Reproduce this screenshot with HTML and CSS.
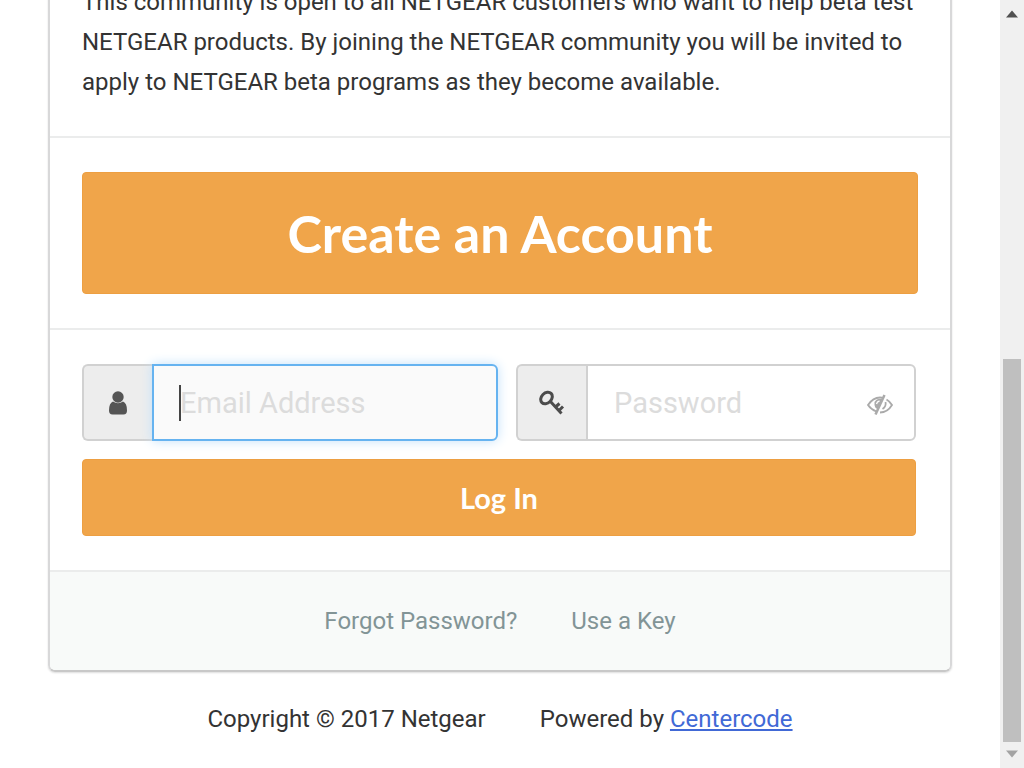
FILE: index.html
```html
<!DOCTYPE html>
<html lang="en">
<head>
<meta charset="utf-8">
<meta name="viewport" content="width=device-width, initial-scale=1">
<title>NETGEAR Community</title>
<link rel="stylesheet" href="styles.css">
</head>
<body>
<div class="page">
  <main class="card">
    <section class="section intro">
      <p>This community is open to all NETGEAR customers who want to help beta test NETGEAR products. By joining the NETGEAR community you will be invited to apply to NETGEAR beta programs as they become available.</p>
    </section>
    <section class="section">
      <button class="button button-large" type="button">Create an Account</button>
    </section>
    <section class="section">
      <form class="login">
        <div class="fields">
          <div class="field field-email">
            <label class="addon" for="email" aria-label="Email Address">
              <svg width="18" height="24" viewBox="0 0 18 24" fill="#555"><circle cx="9" cy="6" r="5.7"/><path d="M4 10.5Q9 14 14 10.5Q18 12 18 19.500Q18 23.500 14.500 23.500H3.500Q0 23.500 0 19.500Q0 12 4 10.500Z"/></svg>
            </label>
            <div class="control focused"><input id="email" type="email" placeholder="Email Address"></div>
          </div>
          <div class="field field-password">
            <label class="addon" for="password" aria-label="Password">
              <svg width="26" height="26" viewBox="0 0 26 26" fill="none" stroke="#4c4c4c"><ellipse cx="7.500" cy="8" rx="6.500" ry="5" transform="rotate(-45 7.500 8)" stroke-width="3"/><path d="M11 11L22.500 23.500M16.500 17L20.500 13.500M20 20.500L24 16.500" stroke-width="3"/></svg>
            </label>
            <div class="control">
              <input id="password" type="password" placeholder="Password">
              <button class="reveal" type="button" aria-label="Show password">
                <svg width="28" height="22" viewBox="0 0 28 22" fill="none" stroke="#aaa" stroke-width="1.800"><path d="M10.500 17.500Q5 15.500 2 11Q7 3.500 14 3.500Q16 3.500 17.500 4M20.500 5.500Q24 7.500 26 11Q21.500 18.500 14 18.500"/><path d="M8.500 8Q8 14 11.500 15L17 5Q11 3.500 8.500 8Z" fill="#aaa" stroke="none"/><path d="M18.500 1L9.500 20.500" stroke-width="2.500"/><path d="M19.500 8Q20.500 12.500 16.500 15"/><path d="M10.500 10Q11 7.500 13.500 7" stroke="#fff" stroke-width="1.300"/></svg>
              </button>
            </div>
          </div>
        </div>
        <button class="button" type="submit">Log In</button>
      </form>
    </section>
    <nav class="links">
      <a href="#">Forgot Password?</a>
      <a href="#">Use a Key</a>
    </nav>
  </main>
  <footer class="footer">
    <span>Copyright © 2017 Netgear</span>
    <span>Powered by <a href="#">Centercode</a></span>
  </footer>
</div>
<div class="scrollbar" aria-hidden="true">
  <svg width="12" height="8" viewBox="0 0 12 8"><path d="M0 7.500L6 0.500L12 7.500Z" fill="#505050"/></svg>
  <div class="track"><div class="thumb"></div></div>
  <svg width="12" height="8" viewBox="0 0 12 8"><path d="M0 0.500L6 7.500L12 0.500Z" fill="#a3a3a3"/></svg>
</div>
</body>
</html>
```
FILE: styles.css
```css
* { box-sizing: border-box; }
body {
  margin: 0;
  height: 100vh;
  display: flex;
  overflow: hidden;
  background: #fff;
  color: #333;
  font: 24px/40px Roboto, "Liberation Sans", sans-serif;
}
svg { display: block; }
.page { flex: 1; min-width: 0; padding: 0 48px; }
.card {
  margin-top: -18px;
  border: 2px solid #d8d8d9;
  border-top: 0;
  border-bottom-color: #c8c8c8;
  border-radius: 0 0 7px 7px;
  box-shadow: 0 1px 2px #ddd;
}
.section { padding: 34px 32px; border-bottom: 2px solid #ebecec; }
.intro { padding-top: 0; }
.intro p { margin: 0; }
.button {
  display: block;
  width: 100%;
  height: 77px;
  border: 1px solid #ed9f42;
  border-radius: 4px;
  background: #f0a54a;
  color: #fff;
  font: bold 29px Lato, sans-serif;
}
.button-large { height: 122px; font-size: 52px; }
.login { display: grid; gap: 18px; padding-right: 2px; }
.fields { display: flex; gap: 18px; }
.field { display: flex; min-width: 0; height: 77px; }
.field-email { flex: 416; }
.field-password { flex: 400; }
.addon {
  display: grid;
  place-items: center;
  width: 70px;
  flex: none;
  border: 2px solid #d1d1d1;
  border-right: 0;
  border-radius: 6px 0 0 6px;
  background: #ededed;
}
.control {
  position: relative;
  display: flex;
  align-items: center;
  flex: 1;
  min-width: 0;
  border: 2px solid #d1d1d1;
  border-radius: 0 6px 6px 0;
}
.control input {
  width: 100%;
  min-width: 0;
  height: 100%;
  padding: 0 26px;
  border: 0;
  outline: 0;
  background: transparent;
  font: 29px Roboto, sans-serif;
}
.control input::placeholder { color: #dcdcdc; opacity: 1; }
.focused { border-color: #66b3f0; background: #fafafa; box-shadow: 0 0 12px #c3e1fa; }
.focused::before {
  content: "";
  position: absolute;
  left: 25px;
  width: 2px;
  height: 36px;
  background: #444;
}
.reveal { flex: none; margin: 4px 20px 0 0; padding: 0; border: 0; background: none; }
.links {
  display: flex;
  justify-content: center;
  gap: 54px;
  padding: 29px 32px;
  border-radius: 0 0 5px 5px;
  background: #f8faf9;
}
.links a { color: #829496; text-decoration: none; }
.footer { display: flex; justify-content: center; gap: 54px; padding-top: 27px; }
.footer a { color: #4169d6; }
.scrollbar {
  display: flex;
  flex-direction: column;
  align-items: center;
  gap: 8px;
  width: 24px;
  padding: 10px 0;
  background: #f0f0f0;
}
.track { display: flex; flex-direction: column; justify-content: flex-end; flex: 1; }
.thumb { width: 18px; height: 53.5%; background: #bfbfbf; }
```
